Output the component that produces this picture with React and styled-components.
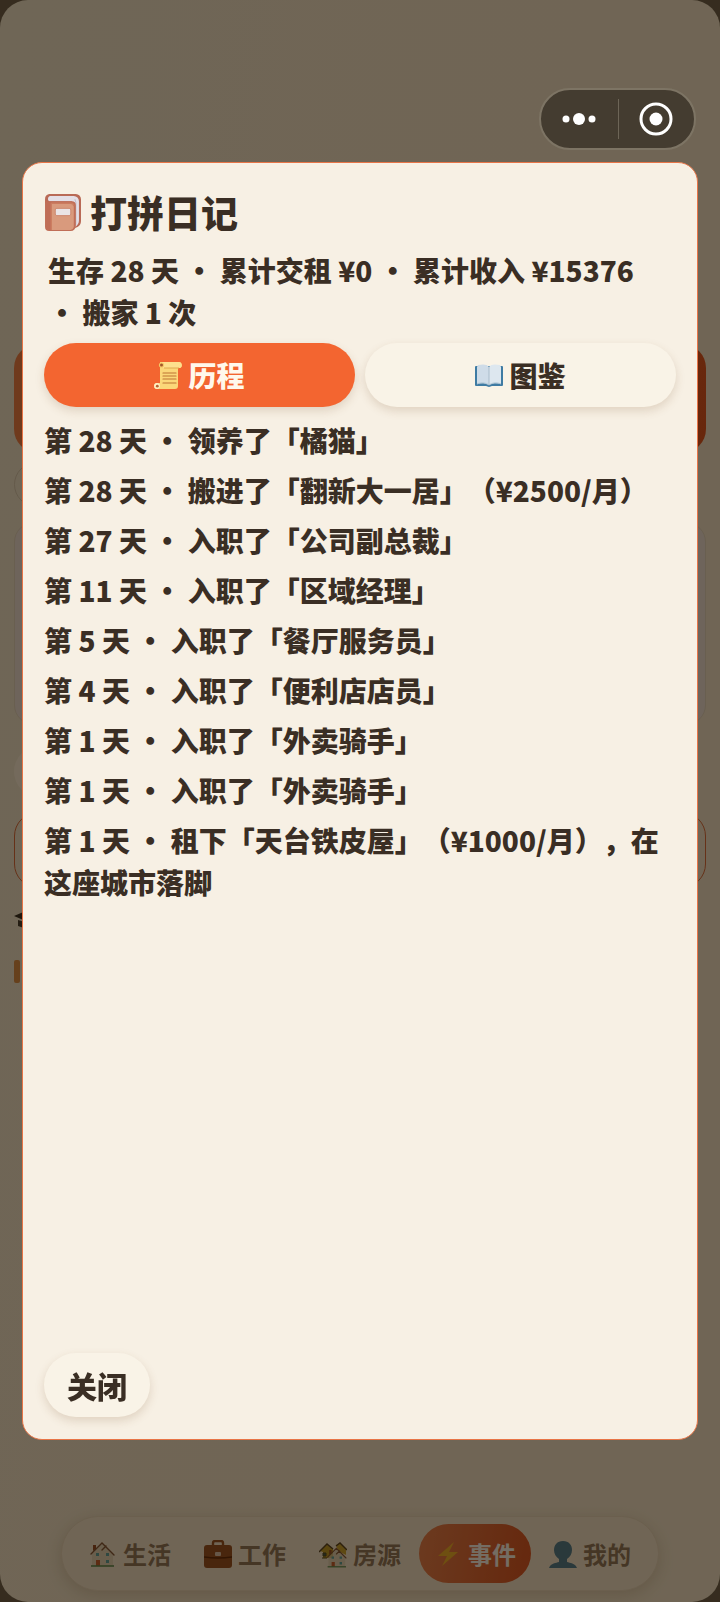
import React, { useState } from 'react'
import styled, { createGlobalStyle } from 'styled-components'

const logs = [
    '第 28 天 · 领养了「橘猫」',
    '第 28 天 · 搬进了「翻新大一居」（¥2500/月）',
    '第 27 天 · 入职了「公司副总裁」',
    '第 11 天 · 入职了「区域经理」',
    '第 5 天 · 入职了「餐厅服务员」',
    '第 4 天 · 入职了「便利店店员」',
    '第 1 天 · 入职了「外卖骑手」',
    '第 1 天 · 入职了「外卖骑手」',
    '第 1 天 · 租下「天台铁皮屋」（¥1000/月），在这座城市落脚',
]

const BookIcon = () => (
    <svg viewBox="0 0 36 36" aria-hidden="true">
        <path d="M5 0h26a5 5 0 0 1 5 5v21c0 4-2 6-6 7V9H1V5a5 5 0 0 1 4-5z" fill="#b96a56" />
        <path d="M6 2h23a5 5 0 0 1 5 5v19c0 3-2 5-4 6V10L27 7H5C3 6 4 2 6 2z" fill="#e4dfe6" />
        <path d="M30 5l1 3v22" stroke="#c3bcc9" strokeWidth="1" fill="none" />
        <path d="M1 5c1 2 2 2 4 2h22a4 4 0 0 1 4 4v20a5 5 0 0 1-5 5H5a4 4 0 0 1-4-4z" fill="#c06e57" />
        <path d="M7 9h19a3 3 0 0 1 3 3v20a4 4 0 0 1-3 3H7z" fill="#d99a7d" />
        <path d="M7 9v26M7 9h19a3 3 0 0 1 3 3" stroke="#cb7c60" strokeWidth="1.4" fill="none" />
        <rect x="11" y="14" width="15" height="7" rx="1.5" fill="#eae4e6" stroke="#cb8168" strokeWidth=".8" />
    </svg>
)

const ScrollIcon = () => (
    <svg viewBox="0 0 28 28" aria-hidden="true">
        <path d="M6 1h19c3 0 4 5 1 6h-2v18c0 2-1 3-3 3H3c-4 0-4-6 0-6h3z" fill="#fbd779" />
        <path d="M6 1h19c3 0 4 5 1 6H9c0-4-1-6-3-6z" fill="#fde08d" />
        <path d="M10 7h15" stroke="#dfaa50" strokeWidth="1" />
        <circle cx="7.5" cy="4" r="2.6" fill="#f4c766" />
        <circle cx="7.5" cy="4" r="1.5" fill="#a4592c" />
        <circle cx="3" cy="25" r="2.9" fill="#fff0c4" />
        <circle cx="3.3" cy="25.2" r="1.4" fill="#b86332" />
        <path d="M9 12h13M9 15h13M9 18h13M9 22h13" stroke="#bd7535" strokeWidth="1.2" strokeLinecap="round" />
    </svg>
)

const OpenBookIcon = () => (
    <svg viewBox="0 0 28 28" aria-hidden="true">
        <path d="M1 5h26a1 1 0 0 1 1 1v18a1 1 0 0 1-1 1H17l-3 1-3-1H1a1 1 0 0 1-1-1V6a1 1 0 0 1 1-1z" fill="#3f7ba3" />
        <path d="M3 4c5-1 9-1 11 2v18c-4-2-8-2-12-1V6z" fill="#cfdce8" />
        <path d="M25 4c-5-1-9-1-11 2v18c4-2 8-2 12-1V6z" fill="#dde7ef" />
        <path d="M14 6v18" stroke="#a9bccb" strokeWidth="1" />
        <path d="M2 23c5-2 9-1 12 1 3-2 7-3 12-1" stroke="#adc3d3" strokeWidth="1" fill="none" />
    </svg>
)

const House = () => (
    <g>
        <path d="M3 14L14 3l10 12v11H3z" fill="#d8d0b8" opacity=".7" />
        <path d="M4 11V5h3v4z" fill="#8c3f22" />
        <path d="M2 14L13 3l12 12M13 10l4-4" stroke="#754a35" strokeWidth="1.4" fill="none" strokeLinecap="round" />
        <path d="M7 20h4v6H7z" fill="#c1562e" />
        <path d="M7 13h3v3H7zM17 13h3v3h-3zM17 20h3v3h-3z" fill="#4a9fa6" />
        <path d="M2 26h23" stroke="#4d8551" strokeWidth="1.6" />
    </g>
)

const HouseIcon = () => <svg viewBox="0 0 28 28" aria-hidden="true"><House /></svg>

const HousesIcon = () => (
    <svg viewBox="0 0 28 28" aria-hidden="true">
        <path d="M1 11l7-7 6 5v9H4v-6z" fill="#b79522" />
        <path d="M17 5l4-2 6 6v6l-8-4z" fill="#c4a02b" />
        <path d="M0 12l8-8 6 5M17 6l4-3 7 7" stroke="#44351f" strokeWidth="1.4" fill="none" />
        <path d="M4 13h3v3H4zM3 18h5" fill="#2c4f52" stroke="#3c3a1b" />
        <g transform="translate(7 6) scale(.8)"><House /></g>
    </svg>
)

const CaseIcon = () => (
    <svg viewBox="0 0 28 28" aria-hidden="true">
        <path d="M9 7V3a2 2 0 0 1 2-2h6a2 2 0 0 1 2 2v4" stroke="#8d451f" strokeWidth="2.4" fill="none" />
        <rect x="0" y="5" width="28" height="23" rx="3" fill="#8f461d" />
        <path d="M0 17q14 2 28 0" stroke="#501900" strokeWidth="1.4" fill="none" />
        <rect x="11" y="12" width="6" height="4" rx="1" fill="#dac6b8" />
    </svg>
)

const BoltIcon = () => (
    <svg viewBox="0 0 28 28" aria-hidden="true">
        <path d="M20 2L4 16h9L8 26l16-14h-9z" fill="#f0b028" />
    </svg>
)

const PersonIcon = () => (
    <svg viewBox="0 0 28 28" aria-hidden="true">
        <path d="M14 1c-6 0-9 4-9 9 0 4 2 7 5 9v3c-3 1-8 1-10 6h28c-2-5-7-5-10-6v-3c3-2 5-5 5-9 0-5-3-9-9-9z" fill="#3d7695" />
    </svg>
)

const CapIcon = () => (
    <svg viewBox="0 0 28 28" aria-hidden="true">
        <path d="M0 10L14 4l14 6-14 6z" fill="#1d1d1d" />
        <path d="M4 14v6q9 4 18 0v-7l-8 4z" fill="#2d2d2d" />
    </svg>
)

const navItems = [
    { name: '生活', icon: <HouseIcon /> },
    { name: '工作', icon: <CaseIcon /> },
    { name: '房源', icon: <HousesIcon /> },
    { name: '事件', icon: <BoltIcon /> },
    { name: '我的', icon: <PersonIcon /> },
]

export default function App() {
    const [tab, setTab] = useState('log')

    return (
        <>
            <GlobalStyle />
            <Page>
                <Home>
                    <Banner />
                    <Chip />
                    <Card />
                    <Pill />
                    <Outline />
                    <Heading><Icon $size={28}><CapIcon /></Icon></Heading>
                    <Progress />
                </Home>
                <Nav>
                    {navItems.map((item) => (
                        <NavItem key={item.name} $active={item.name === '事件'}>
                            <Icon $size={28}>{item.icon}</Icon>
                            {item.name}
                        </NavItem>
                    ))}
                </Nav>
            </Page>

            <Mask>
                <Dialog role="dialog" aria-labelledby="diary-title">
                    <Title id="diary-title">
                        <Icon $size={37}><BookIcon /></Icon>
                        打拼日记
                    </Title>
                    <Summary>生存 28 天 · 累计交租 ¥0 · 累计收入 ¥15376 · 搬家 1 次</Summary>
                    <Tabs>
                        <Tab $active={tab === 'log'} onClick={() => setTab('log')}>
                            <Icon $size={28}><ScrollIcon /></Icon>
                            历程
                        </Tab>
                        <Tab $active={tab === 'book'} onClick={() => setTab('book')}>
                            <Icon $size={28}><OpenBookIcon /></Icon>
                            图鉴
                        </Tab>
                    </Tabs>
                    <LogList>
                        {tab === 'log' && logs.map((text, i) => <li key={i}>{text}</li>)}
                    </LogList>
                    <CloseButton>关闭</CloseButton>
                </Dialog>
            </Mask>

            <Capsule>
                <CapsuleButton aria-label="更多">
                    <svg width="34" height="14" viewBox="0 0 34 14">
                        <circle cx="4" cy="7" r="3.5" fill="#fff" />
                        <circle cx="17" cy="7" r="6" fill="#fff" />
                        <circle cx="30" cy="7" r="3.5" fill="#fff" />
                    </svg>
                </CapsuleButton>
                <CapsuleButton aria-label="关闭小程序">
                    <svg width="34" height="34" viewBox="0 0 34 34">
                        <circle cx="17" cy="17" r="15" fill="none" stroke="#fff" strokeWidth="3" />
                        <circle cx="17" cy="17" r="6.5" fill="#fff" />
                    </svg>
                </CapsuleButton>
            </Capsule>
        </>
    )
}

const GlobalStyle = createGlobalStyle`
* {
    box-sizing: border-box;
}
body {
    margin: 0;
    background: #5c564c;
    color: #3a2e24;
    font-family: "Noto Sans CJK SC", sans-serif;
    font-weight: 900;
    text-spacing-trim: space-all;
}
button {
    border: 0;
    font: inherit;
    color: inherit;
    cursor: pointer;
}
`

const Page = styled.div`
display: flex;
flex-direction: column;
min-height: 100vh;
padding: 344px 14px 11px;
border-radius: 28px;
background: linear-gradient(100deg, #f1ecdd, #f5ebda 60%, #f3ebda);
`

const Home = styled.div`
display: flex;
flex-direction: column;
align-items: flex-start;
flex: 1;
`

const Banner = styled.div`
width: 100%;
height: 109px;
border-radius: 24px;
background: linear-gradient(90deg, #f27a48, #e0491c);
`

const Chip = styled.div`
width: 180px;
height: 45px;
margin-top: 9px;
border: 1px solid #d5ccbd;
border-radius: 23px;
`

const Card = styled.div`
width: 100%;
height: 203px;
margin-top: 15px;
border: 1px solid #e2d9cc;
border-radius: 20px;
background: #efe8ea;
`

const Pill = styled.div`
width: 160px;
height: 51px;
margin-top: 21px;
border-radius: 26px;
background: #fff8ec;
`

const Outline = styled.div`
width: 100%;
height: 76px;
margin-top: 15px;
border: 1px solid #d9623a;
border-radius: 24px;
`

const Heading = styled.div`
margin-top: 18px;
`

const Progress = styled.div`
width: 6px;
height: 23px;
margin-top: 26px;
border-radius: 2px;
background: #d98a45;
`

const Icon = styled.span`
flex: none;
display: block;
width: ${(props) => props.$size}px;
height: ${(props) => props.$size}px;
svg{
    display: block;
    width: 100%;
    height: 100%;
}
`

const Nav = styled.nav`
display: flex;
align-self: center;
gap: 3px;
padding: 7px 12px;
border: 1px solid #e6dac8;
border-radius: 38px;
background: #f5ebdb;
box-shadow: 0 4px 16px rgba(90, 60, 30, 0.2);
`

const NavItem = styled.button`
display: flex;
align-items: center;
justify-content: center;
gap: 6px;
width: 112px;
height: 59px;
padding: 0;
border-radius: 30px;
font-size: 24px;
font-weight: 700;
color: ${(props) => (props.$active ? '#fff' : '#846f5d')};
background: ${(props) => (props.$active ? 'linear-gradient(100deg, #e87a4e, #d9491f)' : 'transparent')};
`

const Mask = styled.div`
position: fixed;
inset: 0;
display: flex;
padding: 162px 22px;
background: rgba(30, 19, 4, 0.62);
`

const Dialog = styled.section`
flex: 1;
display: flex;
flex-direction: column;
gap: 9px;
min-width: 0;
padding: 21px 21px 22px;
border: 1px solid #e87547;
border-radius: 20px;
background: #f7f0e4;
`

const Title = styled.h1`
display: flex;
align-items: center;
gap: 9px;
margin: 0;
font-size: 37px;
font-weight: 900;
line-height: 56px;
`

const Summary = styled.p`
margin: 0;
padding: 0 16px 1px 4px;
font-size: 28px;
line-height: 42px;
`

const Tabs = styled.div`
display: flex;
gap: 10px;
`

const Tab = styled.button`
flex: 1;
display: flex;
align-items: center;
justify-content: center;
gap: 6px;
height: 64px;
border-radius: 32px;
font-size: 28px;
color: ${(props) => (props.$active ? '#fff8ec' : '#3a2e24')};
background: ${(props) => (props.$active ? '#f36530' : '#f9f3e7')};
box-shadow: 0 4px 10px rgba(120, 80, 40, 0.18);
`

const LogList = styled.ul`
flex: 1;
display: flex;
flex-direction: column;
gap: 8px;
min-height: 0;
margin: 0;
padding: 3px 0 0;
overflow: auto;
list-style: none;
font-size: 28px;
line-height: 42px;
`

const CloseButton = styled.button`
align-self: flex-start;
height: 64px;
padding: 0 23px;
border-radius: 32px;
font-size: 30px;
background: #f9f3e7;
box-shadow: 0 4px 10px rgba(120, 80, 40, 0.18);
`

const Capsule = styled.div`
position: fixed;
top: 88px;
right: 24px;
display: flex;
width: 157px;
height: 62px;
border: 2px solid #7d7464;
border-radius: 31px;
background: #443c30;
`

const CapsuleButton = styled.button`
flex: 1;
display: flex;
align-items: center;
justify-content: center;
position: relative;
padding: 0;
background: none;
& + &::before{
    content: "";
    position: absolute;
    left: 0;
    top: 9px;
    bottom: 9px;
    width: 1px;
    background: #6d6557;
}
`
